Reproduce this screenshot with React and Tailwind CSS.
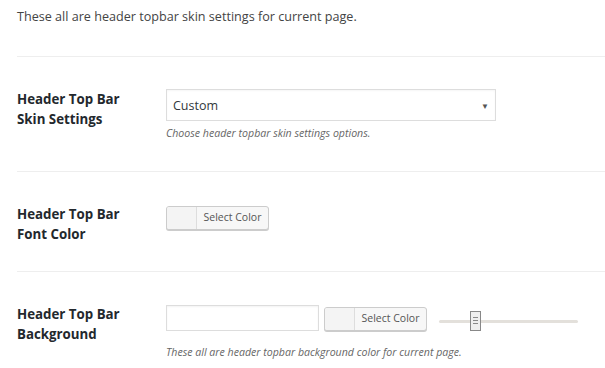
import React from 'react';

export default function App() {
  return (
    <div className="min-h-screen bg-white pl-[17px] font-['Open_Sans',sans-serif] text-[#444]">
      <p className="pt-[8px] text-[12.6px] leading-[18px] text-[#444]">
        These all are header topbar skin settings for current page.
      </p>

      <div className="mt-[30px] border-t border-[#eee]">
        {/* Skin settings */}
        <Row label1="Header Top Bar" label2="Skin Settings" className="h-[115px]">
          <div className="flex h-[32px] w-[330px] items-center justify-between border border-[#ddd] bg-white pl-[6px] pr-[6px] pt-[2px] shadow-[inset_0_1px_2px_rgba(0,0,0,0.04)]">
            <span className="text-[12.5px] text-[#32373c]">Custom</span>
            <span className="text-[8px] text-[#555]">▼</span>
          </div>
          <p className="mt-[5px] text-[10.6px] italic leading-[14px] text-[#666]">
            Choose header topbar skin settings options.
          </p>
        </Row>

        {/* Font colour */}
        <Row label1="Header Top Bar" label2="Font Color" className="h-[100px]">
          <div className="mt-[2px]">
            <ColorButton />
          </div>
        </Row>

        {/* Background */}
        <Row label1="Header Top Bar" label2="Background" className="h-[110px]" last>
          <div className="flex items-center">
            <div className="h-[26px] w-[153px] border border-[#ddd] bg-white shadow-[inset_0_1px_2px_rgba(0,0,0,0.05)]" />
            <div className="ml-[5px] mt-[3px]">
              <ColorButton />
            </div>
            <Slider />
          </div>
          <p className="mt-[14px] text-[10.6px] italic leading-[14px] text-[#666]">
            These all are header topbar background color for current page.
          </p>
        </Row>
      </div>
    </div>
  );
}

function Row({ label1, label2, children, className, last }) {
  return (
    <div className={`flex pt-[32px] ${last ? '' : 'border-b border-[#eee]'} ${className}`}>
      <div className="w-[149px] shrink-0 text-[13.3px] font-bold leading-[20px] text-[#23282d]">
        <div>{label1}</div>
        <div>{label2}</div>
      </div>
      <div>{children}</div>
    </div>
  );
}

function ColorButton() {
  return (
    <div className="flex h-[24px] w-[103px] overflow-hidden rounded-[3px] border border-[#ccc] bg-[#f7f7f7] shadow-[0_1px_0_#ccc]">
      <div className="w-[30px] border-r border-[#ddd] bg-[#f4f4f4]" />
      <span className="flex flex-1 items-center justify-center text-[10.5px] text-[#555]">
        Select Color
      </span>
    </div>
  );
}

function Slider() {
  return (
    <div className="relative ml-[12px] mt-[6px] h-[20px] w-[139px]">
      <div className="absolute left-0 right-0 top-[9px] h-[3px] rounded-full bg-[#e3e0db]" />
      <div className="absolute left-[31px] top-0 flex h-[20px] w-[11px] flex-col items-center justify-center gap-[2px] border border-[#888] bg-[#eeeeee]">
        <div className="h-px w-[5px] bg-[#888]" />
        <div className="h-px w-[5px] bg-[#888]" />
        <div className="h-px w-[5px] bg-[#888]" />
      </div>
    </div>
  );
}
